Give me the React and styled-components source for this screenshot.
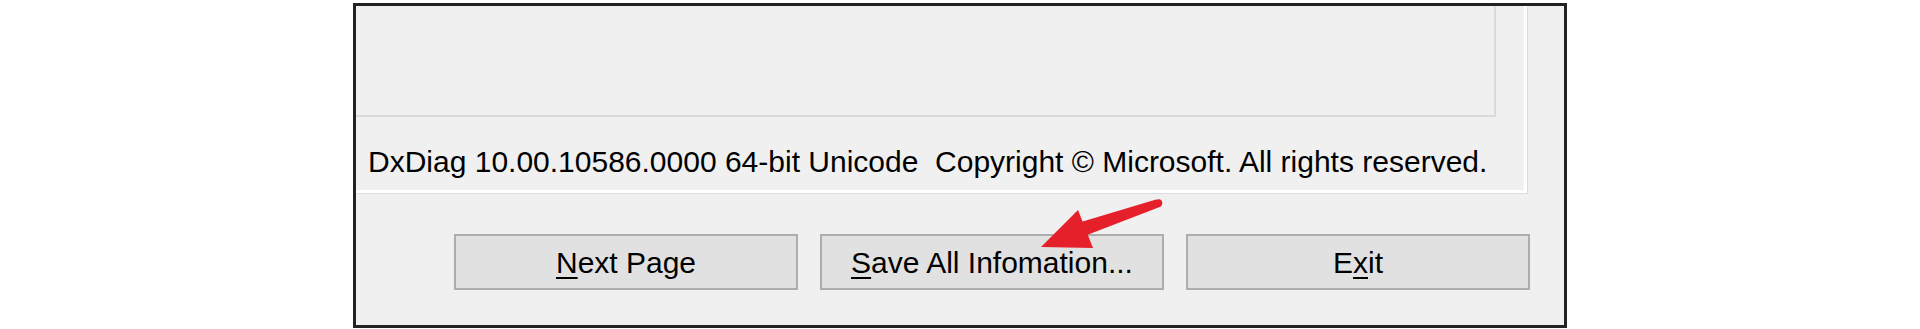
import styled, { createGlobalStyle } from 'styled-components';

const GlobalStyle = createGlobalStyle`
  html, body {
    margin: 0;
    background: #ffffff;
  }

  body {
    font-family: "Liberation Sans", Arial, sans-serif;
    color: #000000;
  }
`;

const Frame = styled.div`
  position: relative;
  box-sizing: border-box;
  width: 1214px;
  height: 325px;
  margin: 3px auto 0;
  border: 3px solid #222222;
  background: #f0f0f0;
  overflow: hidden;
  display: flex;
  flex-direction: column;
`;

const GroupBox = styled.div`
  box-sizing: border-box;
  width: 1171px;
  height: 187px;
  border-right: 3px solid #ffffff;
  border-bottom: 3px solid #ffffff;
  box-shadow: 1px 1px 0 #dcdcdc;
  display: flex;
  flex-direction: column;
`;

const ListPanel = styled.div`
  box-sizing: border-box;
  width: 1140px;
  height: 111px;
  border-right: 2px solid #dadada;
  border-bottom: 2px solid #dadada;
`;

const VersionLine = styled.p`
  margin: 28px 0 0;
  padding-left: 12px;
  font-size: 30px;
  line-height: 34px;
  white-space: pre;
`;

const ButtonRow = styled.div`
  display: flex;
  gap: 22px;
  margin-top: 41px;
  padding-left: 98px;
`;

const DialogButton = styled.button`
  box-sizing: border-box;
  width: 344px;
  height: 56px;
  padding: 2px 0 0;
  border: 2px solid #adadad;
  background: #e1e1e1;
  font-family: "Liberation Sans", Arial, sans-serif;
  font-size: 30px;
  color: #000000;
  display: flex;
  align-items: center;
  justify-content: center;
`;

const Mnemonic = styled.span`
  text-decoration: underline;
  text-decoration-thickness: 2px;
  text-underline-offset: 4px;
`;

// red pointer drawn over the "Save All" button
const ArrowMark = styled.svg`
  position: absolute;
  left: 675px;
  top: 189px;
  width: 140px;
  height: 70px;
  overflow: visible;
  pointer-events: none;
`;

const buttons = [
  { key: 'next', before: '', letter: 'N', after: 'ext Page' },
  { key: 'save', before: '', letter: 'S', after: 'ave All Infomation...' },
  { key: 'exit', before: 'E', letter: 'x', after: 'it' },
];

export default function App() {
  return (
    <>
      <GlobalStyle />
      <Frame>
        <GroupBox>
          <ListPanel />
          <VersionLine>
            DxDiag 10.00.10586.0000 64-bit Unicode  Copyright © Microsoft. All rights reserved.
          </VersionLine>
        </GroupBox>
        <ButtonRow>
          {buttons.map((button) => (
            <DialogButton key={button.key} type="button">
              {button.before}
              <Mnemonic>{button.letter}</Mnemonic>
              {button.after}
            </DialogButton>
          ))}
        </ButtonRow>
        <ArrowMark viewBox="0 0 140 70">
          <polygon points="50,27 125,4.5 130,11.5 56,40" fill="#e6202a" />
          <circle cx="127.5" cy="8" r="3.8" fill="#e6202a" />
          <polygon points="10,52 47,15 62,53" fill="#e6202a" />
        </ArrowMark>
      </Frame>
    </>
  );
}
